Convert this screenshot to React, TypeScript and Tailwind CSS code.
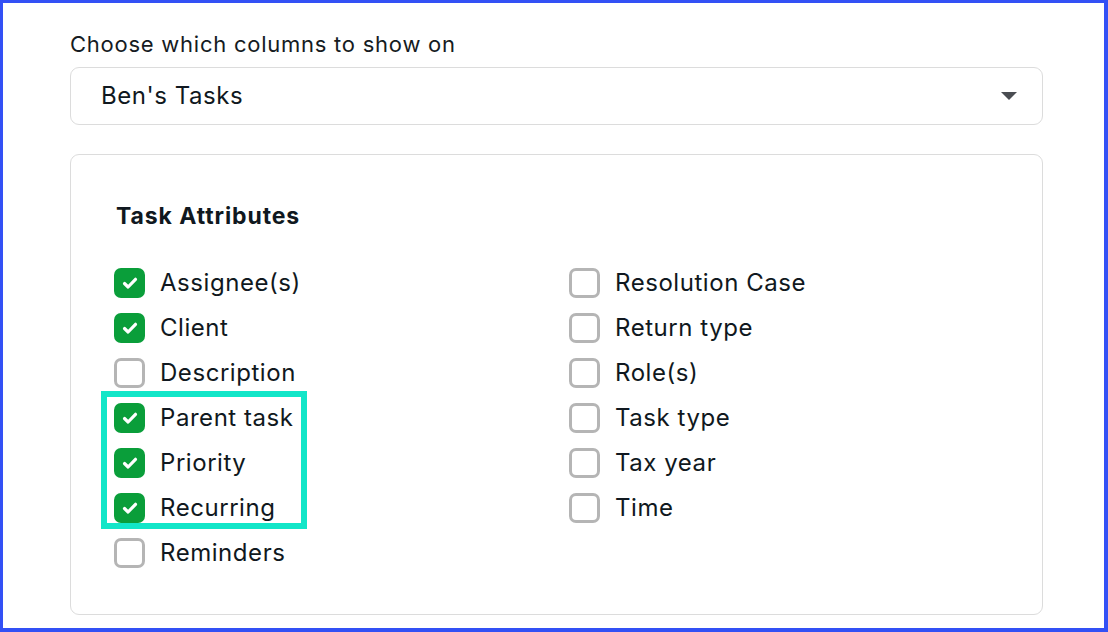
import React from 'react';

const LEFT = [
  { label: 'Assignee(s)', checked: true },
  { label: 'Client', checked: true },
  { label: 'Description', checked: false },
  { label: 'Parent task', checked: true },
  { label: 'Priority', checked: true },
  { label: 'Recurring', checked: true },
  { label: 'Reminders', checked: false },
];

const RIGHT = [
  { label: 'Resolution Case', checked: false },
  { label: 'Return type', checked: false },
  { label: 'Role(s)', checked: false },
  { label: 'Task type', checked: false },
  { label: 'Tax year', checked: false },
  { label: 'Time', checked: false },
];

const Box = ({ checked }: { checked: boolean }) =>
  checked ? (
    <span className="w-[31px] h-[30px] rounded-[7px] bg-[#0a9e3a] flex items-center justify-center shrink-0">
      <svg width="20" height="20" viewBox="0 0 20 20" fill="none">
        <path d="M4.5 10.5l3.6 3.5L15.5 6.3" stroke="#fff" strokeWidth="3.2" strokeLinecap="round" strokeLinejoin="round" />
      </svg>
    </span>
  ) : (
    <span className="w-[31px] h-[30px] rounded-[7px] border-[3px] border-[#b5b5b5] bg-white shrink-0" />
  );

const Row = ({ label, checked }: { label: string; checked: boolean }) => (
  <div className="h-[45px] flex items-center gap-[15px]">
    <Box checked={checked} />
    <span className="text-[24px] tracking-[0.55px] text-[#101820]">{label}</span>
  </div>
);

export default function App() {
  return (
    <div
      className="w-[1108px] h-[632px] bg-white border-t-[3px] border-l-[3px] border-r-4 border-b-4 border-[#3350f5] overflow-hidden"
      style={{ fontFamily: 'Inter, "Noto Sans", sans-serif' }}
    >
      <div className="pl-[67px] pr-[61px] pt-[27px]">
        <p className="text-[22px] tracking-[0.75px] text-[#151b22] leading-[28px]">Choose which columns to show on</p>

        {/* Select */}
        <div className="mt-[9px] h-[58px] rounded-[9px] border border-[#dcdcdc] flex items-center justify-between pl-[30px] pr-[25px]">
          <span className="text-[24px] tracking-[0.55px] text-[#101820]">Ben's Tasks</span>
          <svg width="16" height="8" viewBox="0 0 16 8">
            <path d="M0 0h16L8 8z" fill="#4a4d52" />
          </svg>
        </div>

        {/* Attributes panel */}
        <div className="mt-[29px] h-[461px] rounded-[9px] border border-[#dcdcdc] pl-[43px] pt-[46px]">
          <h3 className="pl-[2px] text-[23px] font-bold tracking-[0.9px] text-[#101820] leading-[30px]">Task Attributes</h3>
          <div className="mt-[29px] flex">
            <div className="relative w-[455px]">
              {LEFT.map(r => <Row key={r.label} {...r} />)}
              {/* highlight */}
              <div className="absolute left-[-13px] top-[131px] w-[206px] h-[138px] border-[6px] border-[#12e6c8]" />
            </div>
            <div>
              {RIGHT.map(r => <Row key={r.label} {...r} />)}
            </div>
          </div>
        </div>
      </div>
    </div>
  );
}
